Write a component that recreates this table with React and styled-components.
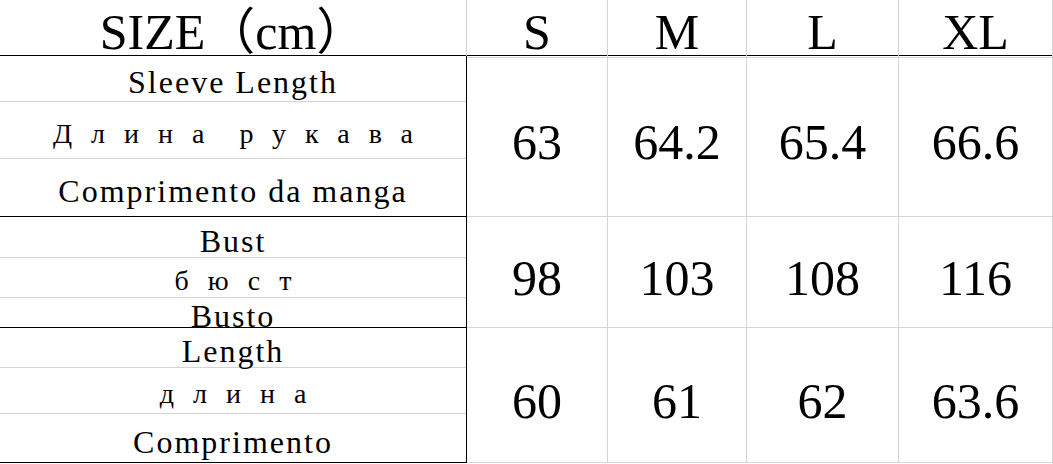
import React from 'react'
import styled, { createGlobalStyle } from 'styled-components'

const GlobalStyle = createGlobalStyle`
	body {
		margin: 0;
		background: #fff;
		font-family: "Liberation Serif", "Noto Sans CJK SC", serif;
		color: #000;
	}
`

const COLUMNS = '467px 141px 139px 152px 154px'
const GRID = '#d4d4d4'

const Table = styled.div`
	width: 1053px;
`

const HeaderRow = styled.div`
	display: grid;
	grid-template-columns: ${COLUMNS};
	height: 54px;
`

const HeaderCell = styled.div`
	box-sizing: border-box;
	display: flex;
	justify-content: center;
	align-items: center;
	padding-top: 7px;
	font-size: 50px;
	line-height: 1;
	border-right: 1px solid ${GRID};
	border-bottom: 1px solid ${(p) => (p.$label ? 'transparent' : GRID)};
	white-space: nowrap;
`

const Body = styled.div`
	margin-top: 1px;
	border-top: 1px solid #000;
`

const Group = styled.div`
	display: grid;
	grid-template-columns: ${COLUMNS};
	height: ${(p) => p.$height}px;
`

const LabelStack = styled.div`
	box-sizing: border-box;
	display: flex;
	flex-direction: column;
	border-right: 1px solid #000;
	border-bottom: 1px solid #000;
`

const SubRow = styled.div`
	box-sizing: border-box;
	flex: 0 0 ${(p) => p.$height}px;
	min-height: 0;
	display: flex;
	justify-content: center;
	align-items: center;
	padding-top: 7px;
	white-space: nowrap;
	border-bottom: 1px solid ${GRID};

	&:last-child {
		border-bottom: none;
	}
`

const Latin = styled.span`
	font-size: 32px;
	line-height: 22px;
	letter-spacing: 2px;
`

const Cyrillic = styled.span`
	font-size: 28px;
	line-height: 22px;
	letter-spacing: 19px;
	word-spacing: -10px;
	margin-right: -19px;
`

const ValueCell = styled.div`
	box-sizing: border-box;
	display: flex;
	justify-content: center;
	align-items: center;
	padding-top: 11px;
	font-size: 50px;
	line-height: 1;
	border-right: 1px solid ${GRID};
	border-bottom: 1px solid ${GRID};
`

const sizes = ['S', 'M', 'L', 'XL']

const measures = [
	{
		height: 161,
		rows: [46, 57, 57],
		en: 'Sleeve Length',
		ru: 'Длина рукава',
		pt: 'Comprimento da manga',
		values: ['63', '64.2', '65.4', '66.6'],
	},
	{
		height: 111,
		rows: [41, 40, 29],
		en: 'Bust',
		ru: 'бюст',
		pt: 'Busto',
		values: ['98', '103', '108', '116'],
	},
	{
		height: 135,
		rows: [40, 46, 48],
		en: 'Length',
		ru: 'длина',
		pt: 'Comprimento',
		values: ['60', '61', '62', '63.6'],
	},
]

const App = () => (
	<>
		<GlobalStyle />
		<Table>
			<HeaderRow>
				<HeaderCell $label>SIZE（cm）</HeaderCell>
				{sizes.map((s) => (
					<HeaderCell key={s}>{s}</HeaderCell>
				))}
			</HeaderRow>
			<Body>
				{measures.map((m) => (
					<Group key={m.en} $height={m.height}>
						<LabelStack>
							<SubRow $height={m.rows[0]}>
								<Latin>{m.en}</Latin>
							</SubRow>
							<SubRow $height={m.rows[1]}>
								<Cyrillic>{m.ru}</Cyrillic>
							</SubRow>
							<SubRow $height={m.rows[2]}>
								<Latin>{m.pt}</Latin>
							</SubRow>
						</LabelStack>
						{m.values.map((v, i) => (
							<ValueCell key={i}>{v}</ValueCell>
						))}
					</Group>
				))}
			</Body>
		</Table>
	</>
)

export default App
